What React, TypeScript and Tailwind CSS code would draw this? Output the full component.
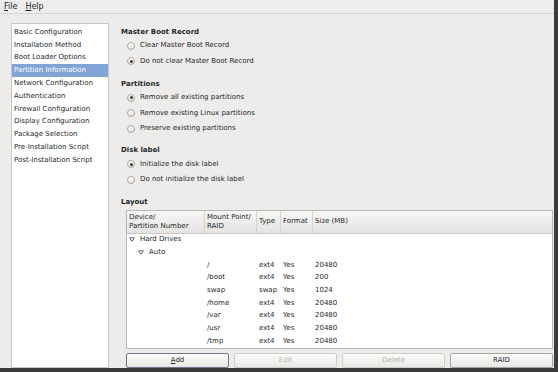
import React from 'react';

const font = { fontFamily: '"DejaVu Sans", Verdana, sans-serif' };

const steps = [
  'Basic Configuration',
  'Installation Method',
  'Boot Loader Options',
  'Partition Information',
  'Network Configuration',
  'Authentication',
  'Firewall Configuration',
  'Display Configuration',
  'Package Selection',
  'Pre-Installation Script',
  'Post-Installation Script',
];

const parts = [
  ['/', 'ext4', '20480'],
  ['/boot', 'ext4', '200'],
  ['swap', 'swap', '1024'],
  ['/home', 'ext4', '20480'],
  ['/var', 'ext4', '20480'],
  ['/usr', 'ext4', '20480'],
  ['/tmp', 'ext4', '20480'],
];

const Radio = ({ label, checked }: { label: string; checked?: boolean }) => (
  <div className="flex h-[15.5px] items-center pl-[6px]">
    <span className="mr-[5px] flex h-[8px] w-[8px] items-center justify-center rounded-full border border-[#a9a7a3] bg-gradient-to-b from-[#ffffff] to-[#e4e2de]">
      {checked && <span className="h-[3px] w-[3px] rounded-full bg-[#3a3a3a]" />}
    </span>
    <span>{label}</span>
  </div>
);

const Heading = ({ children }: { children: React.ReactNode }) => (
  <div className="flex h-[12px] items-center font-bold">{children}</div>
);

const Triangle = () => (
  <svg width="6" height="5" viewBox="0 0 6 5" className="mr-[5px]">
    <path d="M0.5 0.8 L5.5 0.8 L3 4.3 Z" fill="none" stroke="#555" strokeWidth="0.9" />
  </svg>
);

const Button = ({ label, disabled, focus }: { label: string; disabled?: boolean; focus?: boolean }) => (
  <div
    className={`flex h-[15px] w-[103px] items-center justify-center rounded-[2px] border bg-gradient-to-b from-[#fcfcfb] to-[#e9e8e6] ${
      focus ? 'border-[#6d7787]' : disabled ? 'border-[#cfcdc9] text-[#b8b6b2]' : 'border-[#a5a39f]'
    }`}
  >
    {focus ? (
      <span>
        <span className="underline">A</span>dd
      </span>
    ) : (
      label
    )}
  </div>
);

export default function App() {
  return (
    <div
      style={font}
      className="flex h-[372px] w-[558px] flex-col overflow-hidden border-b-[4px] border-r-[4px] border-[#3b3b3b] bg-[#edeceb] text-[7px] leading-none text-[#23282a]"
    >
      <div className="flex h-[14px] items-center gap-[8px] border-b border-[#d6d4d0] bg-[#eeedec] pl-[4px] text-[8px]">
        <span>
          <span className="underline">F</span>ile
        </span>
        <span>
          <span className="underline">H</span>elp
        </span>
      </div>
      <div className="flex flex-1 pl-[11px] pt-[9px]">
        <div className="flex w-[98px] flex-col border border-[#c7c5c1] bg-white pt-[2px]">
          {steps.map((s, i) => (
            <div
              key={s}
              className={`flex h-[12.8px] items-center pl-[2px] ${
                i === 3 ? 'bg-[#82a3d6] text-white' : ''
              }`}
            >
              {s}
            </div>
          ))}
        </div>
        <div className="ml-[12px] flex flex-1 flex-col pr-[1px] pt-[3px]">
          <Heading>Master Boot Record</Heading>
          <Radio label="Clear Master Boot Record" />
          <Radio label="Do not clear Master Boot Record" checked />
          <div className="mt-[9px]">
            <Heading>Partitions</Heading>
          </div>
          <Radio label="Remove all existing partitions" checked />
          <Radio label="Remove existing Linux partitions" />
          <Radio label="Preserve existing partitions" />
          <div className="mt-[8px]">
            <Heading>Disk label</Heading>
          </div>
          <Radio label="Initialize the disk label" checked />
          <Radio label="Do not initialize the disk label" />
          <div className="mt-[9px]">
            <Heading>Layout</Heading>
          </div>
          <div className="ml-[5px] mt-[1px] flex h-[139px] shrink-0 flex-col overflow-hidden border border-[#b9b7b3] bg-white">
            <div className="flex h-[23px] shrink-0 border-b border-[#c9c7c3] bg-gradient-to-b from-[#f7f7f6] to-[#e4e3e1] leading-[9px]">
              <div className="flex w-[78px] items-center border-r border-[#d5d3cf] pl-[2px]">
                Device/
                <br />
                Partition Number
              </div>
              <div className="flex w-[52px] items-center border-r border-[#d5d3cf] pl-[2px]">
                Mount Point/
                <br />
                RAID
              </div>
              <div className="flex w-[24px] items-center border-r border-[#d5d3cf] pl-[2px]">Type</div>
              <div className="flex w-[32px] items-center border-r border-[#d5d3cf] pl-[2px]">Format</div>
              <div className="flex flex-1 items-center pl-[2px]">Size (MB)</div>
            </div>
            <div className="flex shrink-0 flex-col">
              <div className="flex h-[12.7px] shrink-0 items-center pl-[2px]">
                <Triangle />
                Hard Drives
              </div>
              <div className="flex h-[12.7px] shrink-0 items-center pl-[11px]">
                <Triangle />
                Auto
              </div>
              {parts.map(([m, t, s]) => (
                <div key={m} className="flex h-[12.7px] shrink-0 items-center">
                  <div className="w-[78px]" />
                  <div className="w-[52px] pl-[2px]">{m}</div>
                  <div className="w-[24px] pl-[2px]">{t}</div>
                  <div className="w-[32px] pl-[2px]">Yes</div>
                  <div className="pl-[2px]">{s}</div>
                </div>
              ))}
            </div>
          </div>
          <div className="ml-[5px] mt-[4px] flex gap-[5px]">
            <Button label="Add" focus />
            <Button label="Edit" disabled />
            <Button label="Delete" disabled />
            <Button label="RAID" />
          </div>
        </div>
      </div>
    </div>
  );
}
